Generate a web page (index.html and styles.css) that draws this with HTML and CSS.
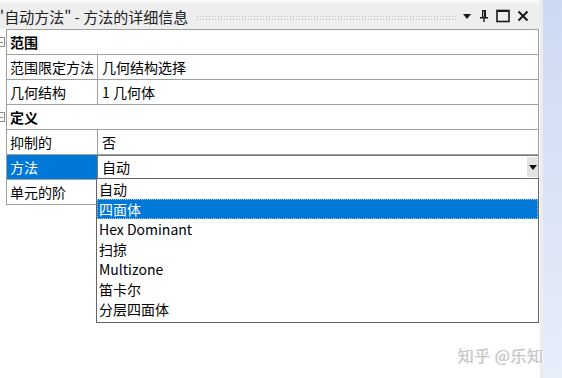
FILE: index.html
```html
<!DOCTYPE html>
<html lang="zh-CN">

<head>
    <meta charset="UTF-8">
    <title>方法的详细信息</title>
    <link rel="stylesheet" href="styles.css">
</head>

<body>
    <div class="app">
        <div class="panel">
            <!-- Title bar -->
            <div class="titlebar">
                <span class="title">"自动方法" - 方法的详细信息</span>
                <span class="grip"></span>
                <span class="tools">
                    <svg width="10" height="8" viewBox="0 0 10 8"><path d="M1 2 H9 L5 7 Z" fill="#1a1a1a"/></svg>
                    <svg width="10" height="14" viewBox="0 0 10 14"><path d="M3 1 H7 V8 H9 V9.5 H5.7 V13 H4.3 V9.5 H1 V8 H3 Z M4.3 2.3 V8 H5 V2.3 Z" fill="#1a1a1a"/></svg>
                    <svg width="14" height="14" viewBox="0 0 14 14"><rect x="1" y="1.5" width="12" height="11" fill="none" stroke="#1a1a1a" stroke-width="1.6"/><rect x="1" y="1" width="12" height="2" fill="#1a1a1a"/></svg>
                    <svg width="12" height="12" viewBox="0 0 12 12"><path d="M1.5 1.5 L10.5 10.5 M10.5 1.5 L1.5 10.5" stroke="#1a1a1a" stroke-width="2"/></svg>
                </span>
            </div>

            <!-- Property grid -->
            <div class="grid">
                <div class="row section">范围</div>
                <div class="row"><div class="label">范围限定方法</div><div class="value">几何结构选择</div></div>
                <div class="row"><div class="label">几何结构</div><div class="value">1 几何体</div></div>
                <div class="row section">定义</div>
                <div class="row"><div class="label">抑制的</div><div class="value">否</div></div>
                <div class="row"><div class="label selected">方法</div>
                    <div class="value combo">
                        <span class="combo-text">自动</span>
                        <span class="combo-btn"><svg width="8" height="5" viewBox="0 0 8 5"><path d="M0 0 H8 L4 5 Z" fill="#111"/></svg></span>
                    </div>
                </div>
                <div class="row"><div class="label">单元的阶</div><div class="value"></div></div>
            </div>

            <!-- Open dropdown list -->
            <ul class="dropdown">
                <li>自动</li>
                <li class="active">四面体</li>
                <li>Hex Dominant</li>
                <li>扫掠</li>
                <li>Multizone</li>
                <li>笛卡尔</li>
                <li>分层四面体</li>
            </ul>
        </div>
        <div class="strip"></div>
    </div>

    <div class="watermark">知乎 @乐知</div>
</body>

</html>
```

FILE: styles.css
```css
/* Page */
body {
    margin: 0;
    width: 562px;
    height: 378px;
    overflow: hidden;
    background: #fff;
    font-family: "Noto Sans CJK SC", "Noto Sans", sans-serif;
    color: #000;
    position: relative;
}

.app {
    display: flex;
    height: 378px;
}

.panel {
    width: 540px;
    position: relative;
    display: flex;
    flex-direction: column;
    background: #fff;
}

.strip {
    flex: 1;
    border-left: 3px solid #ececec;
    background: linear-gradient(#cdd9f3, #e7edf9);
}

/* Title bar */
.titlebar {
    height: 29px;
    box-sizing: border-box;
    border-top: 3px solid #f8f8f8;
    background: #eeeeef;
    display: flex;
    align-items: center;
    overflow: hidden;
}

.title {
    font-size: 15px;
    margin-left: -3px;
    color: #222;
    white-space: nowrap;
    line-height: 1;
}

.grip {
    flex: 1;
    height: 5px;
    margin: 2px 6px 0 8px;
    background-image: radial-gradient(circle, #b8b8b8 0.6px, transparent 0.9px);
    background-size: 3px 3px;
}

.tools {
    display: flex;
    align-items: center;
    gap: 7px;
    margin-right: 11px;
}

/* Property grid */
.grid {
    margin-left: 6px;
    width: 533px;
    box-sizing: border-box;
    border-top: 1px solid #a0a0a0;
    border-left: 1px solid #a0a0a0;
    border-right: 1px solid #a0a0a0;
    font-size: 14px;
}

.row {
    display: flex;
    height: 25px;
    box-sizing: border-box;
    border-bottom: 1px solid #a0a0a0;
}

.section {
    align-items: center;
    padding-left: 3px;
    font-weight: bold;
    position: relative;
}

.section::before {
    content: "";
    position: absolute;
    left: -12px;
    top: 7px;
    width: 8px;
    height: 8px;
    border: 1px solid #8a8a8a;
    background: linear-gradient(#8a8a8a, #8a8a8a) center / 5px 1px no-repeat, #fff;
}

.label {
    width: 87px;
    padding-left: 3px;
    border-right: 1px solid #a0a0a0;
    display: flex;
    align-items: center;
    white-space: nowrap;
}

.label.selected {
    background: #0078d7;
    color: #fff;
}

.value {
    flex: 1;
    padding-left: 4px;
    display: flex;
    align-items: center;
}

.combo {
    padding-left: 0;
    margin-left: -1px;
    border: 1px solid #7a7a7a;
    border-right: none;
}

.combo-text {
    flex: 1;
    padding-left: 4px;
}

.combo-btn {
    width: 11px;
    align-self: stretch;
    margin: 1px 0;
    background: #e3e3e3;
    display: flex;
    align-items: center;
    justify-content: center;
}

/* Dropdown list */
.dropdown {
    position: absolute;
    top: 178px;
    left: 96px;
    width: 443px;
    box-sizing: border-box;
    margin: 0;
    padding: 0 0 3px;
    list-style: none;
    background: #fff;
    border: 1px solid #646464;
    font-size: 14px;
}

.dropdown li {
    height: 20px;
    line-height: 20px;
    padding-left: 2px;
    white-space: nowrap;
}

.dropdown li.active {
    background: #0078d7;
    color: #fff;
    outline: 1px dotted #9cc6ee;
    outline-offset: -1px;
}

/* Watermark */
.watermark {
    position: absolute;
    left: 458px;
    top: 343px;
    font-size: 16px;
    color: #c4c4c4;
    text-shadow: 1px 1px 0 #fff, -1px 0 0 #e4e4e4;
    letter-spacing: 0.5px;
}
```
